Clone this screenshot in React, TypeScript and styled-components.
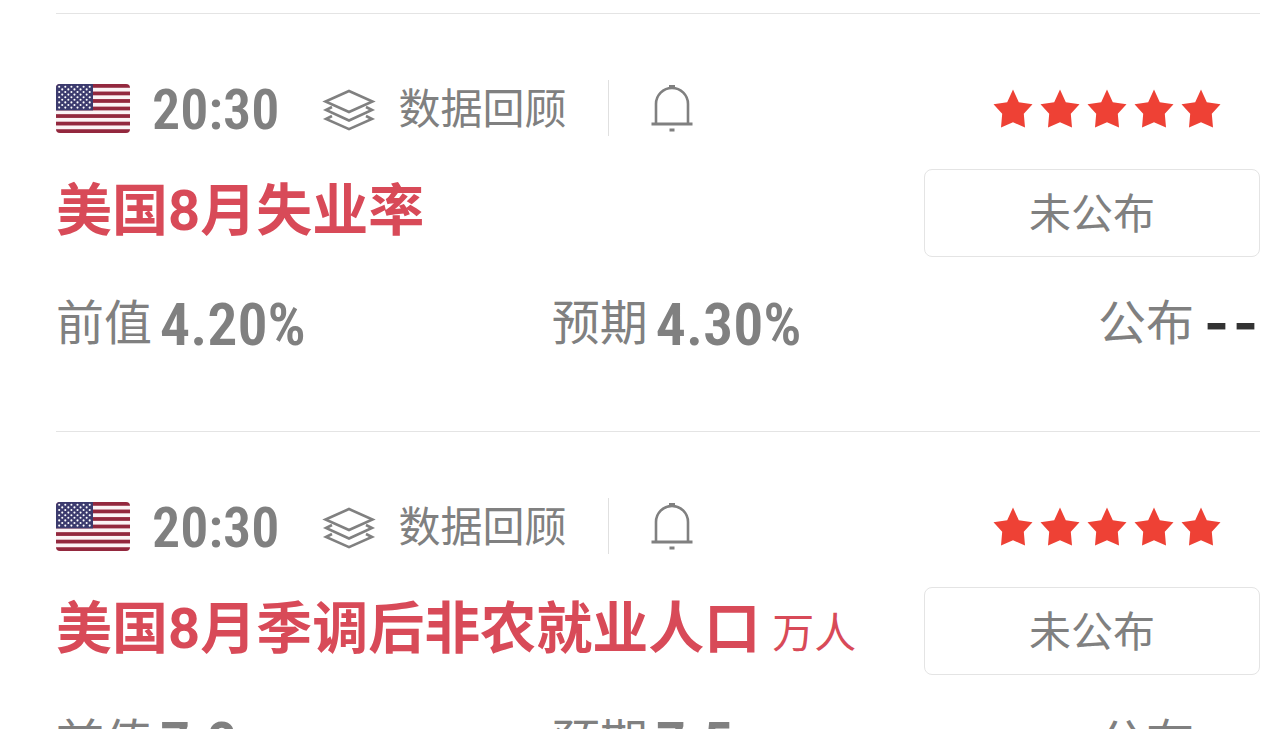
import React from 'react';
import styled, { createGlobalStyle } from 'styled-components';

const GlobalStyle = createGlobalStyle`
  *, *::before, *::after { box-sizing: border-box; }
  body {
    margin: 0;
    background: #fff;
    color: #808080;
    font-family: "Noto Sans CJK SC", "Noto Sans", sans-serif;
  }
`;

const Page = styled.main`
  padding: 13px 16px 0 56px;
  height: 100vh;
  overflow: hidden;
`;

const Event = styled.article`
  border-top: 1px solid #e4e4e4;
  padding: 66px 0 71px;
`;

const Header = styled.header`
  display: flex;
  align-items: center;
  height: 56px;
`;

const Flag = styled.svg`
  width: 74px;
  height: 49px;
  flex: none;
`;

const Time = styled.time`
  margin-left: 22px;
  padding-top: 4px;
  font-family: "Roboto Condensed", "Roboto", sans-serif;
  font-size: 56px;
  line-height: 56px;
  font-weight: 600;
`;

const Review = styled.a`
  display: flex;
  align-items: center;
  gap: 22px;
  height: 56px;
  margin-left: 43px;
  padding-right: 42px;
  border-right: 1px solid #e0e0e0;
  color: inherit;
  font-size: 42px;
  line-height: 56px;
  text-decoration: none;
`;

const ReviewText = styled.span`
  padding-bottom: 4px;
`;

const LayersIcon = styled.svg`
  width: 54px;
  height: 46px;
  flex: none;
`;

const BellButton = styled.button`
  display: flex;
  margin-left: 40px;
  padding: 0;
  border: 0;
  background: none;
  color: inherit;
`;

const Stars = styled.div`
  display: flex;
  gap: 7px;
  margin-left: auto;
  padding-right: 39px;
`;

const Body = styled.div`
  display: flex;
  justify-content: space-between;
  align-items: flex-start;
  margin-top: 33px;
`;

const Title = styled.h2`
  display: flex;
  align-items: baseline;
  gap: 12px;
  margin: 0;
  color: #d84a58;
  font-family: "Roboto", "Noto Sans CJK SC", sans-serif;
  font-size: 56px;
  line-height: 84px;
  font-weight: 700;
`;

const Unit = styled.small`
  font-size: 42px;
  font-weight: 400;
`;

const StatusButton = styled.button`
  width: 336px;
  height: 88px;
  flex: none;
  padding: 0 0 4px;
  border: 1px solid #e4e4e4;
  border-radius: 8px;
  background: #fff;
  color: inherit;
  font-family: inherit;
  font-size: 42px;
  line-height: 56px;
`;

const Figures = styled.dl`
  display: grid;
  grid-template-columns: 7fr 5fr 5fr;
  margin: 33px 0 0;
`;

const Figure = styled.div<{ $end?: boolean }>`
  display: flex;
  align-items: center;
  justify-content: ${(p) => (p.$end ? 'flex-end' : 'flex-start')};
  gap: 8px;
  height: 70px;
`;

const Label = styled.dt`
  padding-bottom: 12px;
  font-size: 48px;
  line-height: 56px;
`;

const Value = styled.dd`
  margin: 0;
  font-family: "Roboto Condensed", "Roboto", sans-serif;
  font-size: 60px;
  line-height: 70px;
  font-weight: 600;
`;

const PendingValue = styled(Value)`
  padding-bottom: 14px;
  color: #333;
  font-family: "Noto Sans Mono CJK SC", monospace;
  font-size: 58px;
  line-height: 56px;
  font-weight: 700;
`;

const stripes = [0, 2, 4, 6, 8, 10, 12];

function UsFlag({ id }: { id: string }) {
  return (
    <Flag viewBox="0 0 74 49" role="img" aria-label="美国">
      <clipPath id={id}>
        <rect width="74" height="49" rx="4" />
      </clipPath>
      <g clipPath={`url(#${id})`}>
        <rect width="74" height="49" fill="#fbf3f5" />
        {stripes.map((n) => (
          <rect key={n} y={(n * 49) / 13} width="74" height={49 / 13} fill="#93283e" />
        ))}
        <rect width="37" height="26.4" fill="#3c3b6e" />
        {Array.from({ length: 9 }, (_, row) =>
          Array.from({ length: row % 2 ? 5 : 6 }, (_, col) => (
            <circle
              key={`${row}-${col}`}
              cx={3.2 + col * 6.1 + (row % 2 ? 3.05 : 0)}
              cy={2.8 + row * 2.6}
              r="1.05"
              fill="#fff"
            />
          )),
        )}
      </g>
    </Flag>
  );
}

function Layers() {
  return (
    <LayersIcon viewBox="0 0 54 46" fill="none" stroke="#808080" strokeWidth="2.6" aria-hidden="true">
      <path d="M27 6 50.500 16.500 27 27 3.500 16.500Z" />
      <path d="M10 22 4 25 27 35.500 50 25 44 22" />
      <path d="M10 31 4 34 27 44.200 50 34 44 31" />
    </LayersIcon>
  );
}

function Bell() {
  return (
    <svg width="46" height="48" viewBox="0 0 46 48" fill="none" stroke="#808080" aria-hidden="true">
      <path d="M7 39.500V20a16 16 0 0 1 32 0v19.500" strokeWidth="2.600" />
      <path d="M2.500 40h41" strokeWidth="3" />
      <path d="M20 2.500h6M20.500 46h5" strokeWidth="3" />
    </svg>
  );
}

function Star() {
  return (
    <svg width="40" height="40" viewBox="0 -1 40 40" aria-hidden="true">
      <path
        fill="#ee4135"
        d="M20 0.500 25.800 13.200 39.500 15.200 30.800 24.800 32 38.500 20 33.200 8 38.500 9.200 24.800 0.500 15.200 14.200 13.200Z"
      />
    </svg>
  );
}

interface Indicator {
  id: string;
  title: string;
  unit?: string;
  previous: string;
  expected: string;
}

const indicators: Indicator[] = [
  { id: 'unemployment', title: '美国8月失业率', previous: '4.20%', expected: '4.30%' },
  { id: 'payrolls', title: '美国8月季调后非农就业人口', unit: '万人', previous: '7.3', expected: '7.5' },
];

function IndicatorEvent({ item }: { item: Indicator }) {
  return (
    <Event>
      <Header>
        <UsFlag id={`flag-${item.id}`} />
        <Time>20:30</Time>
        <Review href="#">
          <Layers />
          <ReviewText>数据回顾</ReviewText>
        </Review>
        <BellButton type="button" aria-label="提醒">
          <Bell />
        </BellButton>
        <Stars role="img" aria-label="5">
          {[1, 2, 3, 4, 5].map((n) => (
            <Star key={n} />
          ))}
        </Stars>
      </Header>
      <Body>
        <Title>
          {item.title}
          {item.unit && <Unit>{item.unit}</Unit>}
        </Title>
        <StatusButton type="button">未公布</StatusButton>
      </Body>
      <Figures>
        <Figure>
          <Label>前值</Label>
          <Value>{item.previous}</Value>
        </Figure>
        <Figure>
          <Label>预期</Label>
          <Value>{item.expected}</Value>
        </Figure>
        <Figure $end>
          <Label>公布</Label>
          <PendingValue>--</PendingValue>
        </Figure>
      </Figures>
    </Event>
  );
}

export default function App() {
  return (
    <>
      <GlobalStyle />
      <Page>
        {indicators.map((item) => (
          <IndicatorEvent key={item.id} item={item} />
        ))}
      </Page>
    </>
  );
}
